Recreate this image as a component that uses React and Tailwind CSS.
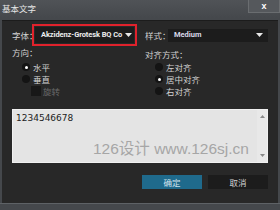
import React from 'react';

const Radio = ({ checked, label }) => (
  <div className="flex items-center h-[12px]">
    <span className="shrink-0 w-[8px] h-[8px] rounded-full bg-[#141414] flex items-center justify-center">
      {checked && <span className="w-[3px] h-[3px] rounded-full bg-white" />}
    </span>
    <span className="ml-[3px] text-[8.5px] leading-[12px] whitespace-nowrap text-[#d2d2d2]">{label}</span>
  </div>
);

const Caret = () => (
  <svg className="shrink-0" width="7" height="4" viewBox="0 0 7 4">
    <path d="M0 0 H7 L3.5 4 Z" fill="#e8e8e8" />
  </svg>
);

const App = () => {
  return (
    <div
      className="w-[280px] h-[210px] bg-[#45484c] flex flex-col overflow-hidden"
      style={{ fontFamily: '"Noto Sans CJK SC", "Liberation Sans", sans-serif' }}
    >
      {/* title bar */}
      <div className="h-[18px] flex items-start justify-between bg-gradient-to-b from-[#505357] to-[#45484c]">
        <span className="pl-[2px] pt-[2px] text-[8.5px] leading-[12px] text-[#e6e6e6]">基本文字</span>
        <div className="w-[32px] h-[13px] bg-[#55585c] border border-[#6a6d70] border-t-0 flex items-center justify-center">
          <span className="text-[9px] leading-none font-bold text-white" style={{ fontFamily: '"Liberation Sans", sans-serif' }}>x</span>
        </div>
      </div>

      {/* body */}
      <div className="flex-1 mx-[2px] mt-[2px] bg-[#282828] border-t border-[#1c1c1c] px-[10px] flex flex-col">
        {/* font / style row */}
        <div className="flex items-center mt-[3px] h-[22px]">
          <span className="shrink-0 w-[20px] whitespace-nowrap text-[8.5px] leading-none text-[#d2d2d2]">字体：</span>
          <div className="shrink-0 w-[105px] h-[22px] border-2 border-[#e0222c] p-[1px]">
            <div className="h-full bg-[#1c1c1c] flex items-center justify-between pl-[6px] pr-[2px]">
              <span className="text-[7.5px] leading-none font-bold tracking-[-0.1px] text-[#ececec] whitespace-nowrap" style={{ fontFamily: 'Roboto, "Liberation Sans", sans-serif' }}>Akzidenz-Grotesk BQ Co</span>
              <Caret />
            </div>
          </div>
          <span className="shrink-0 ml-[8px] w-[23px] whitespace-nowrap text-[8.5px] leading-none text-[#d2d2d2]">样式：</span>
          <div className="shrink-0 w-[100px] h-[13px] bg-[#1c1c1c] flex items-center justify-between pl-[6px] pr-[5px]">
            <span className="text-[7.5px] leading-none font-bold text-[#d8d8e8]" style={{ fontFamily: 'Roboto, "Liberation Sans", sans-serif' }}>Medium</span>
            <Caret />
          </div>
        </div>

        {/* options */}
        <div className="flex">
          <div className="w-[133px] flex flex-col">
            <span className="h-[12px] text-[8.5px] leading-[12px] whitespace-nowrap text-[#d2d2d2]">方向：</span>
            <div className="pl-[10px] mt-[3px] flex flex-col">
              <Radio checked label="水平" />
              <Radio label="垂直" />
              <div className="flex items-center h-[12px] pl-[9px]">
                <span className="shrink-0 w-[10px] h-[10px] bg-[#181818]" />
                <span className="ml-[2px] text-[8.5px] leading-[12px] whitespace-nowrap text-[#6a6a6a]">旋转</span>
              </div>
            </div>
          </div>
          <div className="flex flex-col">
            <span className="mt-[2px] h-[12px] text-[8.5px] leading-[12px] whitespace-nowrap text-[#d2d2d2]">对齐方式：</span>
            <div className="pl-[10px] mt-[1px] flex flex-col">
              <Radio label="左对齐" />
              <Radio checked label="居中对齐" />
              <Radio label="右对齐" />
            </div>
          </div>
        </div>

        {/* text area */}
        <div className="relative mt-[12px] h-[54px] bg-[#e4e4e4] border border-[#f0f0f0] flex">
          <span className="flex-1 pl-[3px] pt-[4px] text-[9px] leading-none text-[#222]" style={{ fontFamily: '"DejaVu Sans", sans-serif' }}>1234546678</span>
          <div className="w-[10px] flex flex-col items-center justify-between py-[5px] bg-[#e8e8e8]">
            <svg width="5" height="3" viewBox="0 0 5 3"><path d="M0 3 L2.5 0 L5 3 Z" fill="#888" /></svg>
            <svg width="5" height="3" viewBox="0 0 5 3"><path d="M0 0 H5 L2.5 3 Z" fill="#888" /></svg>
          </div>
          <span className="absolute left-[80px] top-[31px] text-[15.5px] leading-none text-[#a6a6a6] whitespace-nowrap" style={{ fontFamily: '"Liberation Sans", "Noto Sans CJK SC", sans-serif' }}>126设计 www.126sj.cn</span>
        </div>

        {/* buttons */}
        <div className="flex justify-end gap-[6px] mt-[12px]">
          <button className="w-[60px] h-[14px] bg-[#1f6a8c] text-[8.5px] leading-none text-[#cfe3ee]">确定</button>
          <button className="w-[60px] h-[14px] bg-[#1c1c1c] text-[8.5px] leading-none text-[#d2d2d2]">取消</button>
        </div>
      </div>

      {/* bottom frame */}
      <div className="h-[7px] border-t border-[#5e6266] bg-[#45484c]" />
    </div>
  );
};

export default App;
